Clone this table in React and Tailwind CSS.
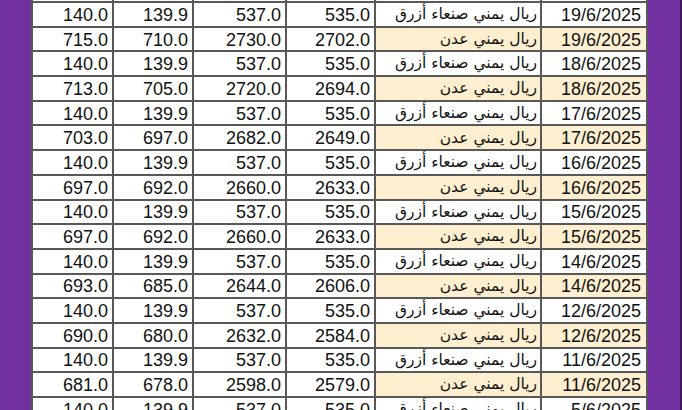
import React from "react";

const S = "ريال يمني صنعاء أزرق";
const A = "ريال يمني عدن";
const sanaa = (d) => ["140.0", "139.9", "537.0", "535.0", S, d, false];
const rows = [
  sanaa("19/6/2025"),
  ["715.0", "710.0", "2730.0", "2702.0", A, "19/6/2025", true],
  sanaa("18/6/2025"),
  ["713.0", "705.0", "2720.0", "2694.0", A, "18/6/2025", true],
  sanaa("17/6/2025"),
  ["703.0", "697.0", "2682.0", "2649.0", A, "17/6/2025", true],
  sanaa("16/6/2025"),
  ["697.0", "692.0", "2660.0", "2633.0", A, "16/6/2025", true],
  sanaa("15/6/2025"),
  ["697.0", "692.0", "2660.0", "2633.0", A, "15/6/2025", true],
  sanaa("14/6/2025"),
  ["693.0", "685.0", "2644.0", "2606.0", A, "14/6/2025", true],
  sanaa("12/6/2025"),
  ["690.0", "680.0", "2632.0", "2584.0", A, "12/6/2025", true],
  sanaa("11/6/2025"),
  ["681.0", "678.0", "2598.0", "2579.0", A, "11/6/2025", true],
  sanaa("5/6/2025"),
];

export default function App() {
  return (
    <div className="flex h-[410px] w-[682px] overflow-hidden bg-[#7030a0]">
      <div className="w-[31px] shrink-0" />
      <div className="h-[410px] shrink-0 overflow-hidden">
        <div
          className="grid grid-cols-[79px_78px_91px_87px_164px_104px] auto-rows-[22.7px] grid-rows-[1px] gap-[2px] border-x-2 border-[#585858] bg-[#585858] text-[18px] leading-none text-[#111]"
          style={{ fontFamily: '"Liberation Sans", Arial, sans-serif' }}
        >
          {[0, 1, 2, 3, 4, 5].map((i) => (
            <div key={"t" + i} className="bg-white" />
          ))}
          {rows.map((r, ri) => (
            <React.Fragment key={ri}>
              {r.slice(0, 4).map((v, ci) => (
                <div key={ci} className="flex items-center justify-end bg-white pr-[4px] pt-[1px]">
                  {v}
                </div>
              ))}
              <div
                dir="rtl"
                className={`flex items-center justify-start pr-[3px] pt-[1px] text-[15.5px] ${r[6] ? "bg-[#fdefcf]" : "bg-white"}`}
                style={{ fontFamily: '"DejaVu Sans", Arial, sans-serif' }}
              >
                {r[4]}
              </div>
              <div className={`flex items-center justify-end pr-[5px] pt-[1px] ${r[6] ? "bg-[#fdefcf]" : "bg-white"}`}>
                {r[5]}
              </div>
            </React.Fragment>
          ))}
        </div>
      </div>
      <div className="flex-1" />
      <div className="w-[2px] shrink-0 bg-[#3b1858]" />
    </div>
  );
}
